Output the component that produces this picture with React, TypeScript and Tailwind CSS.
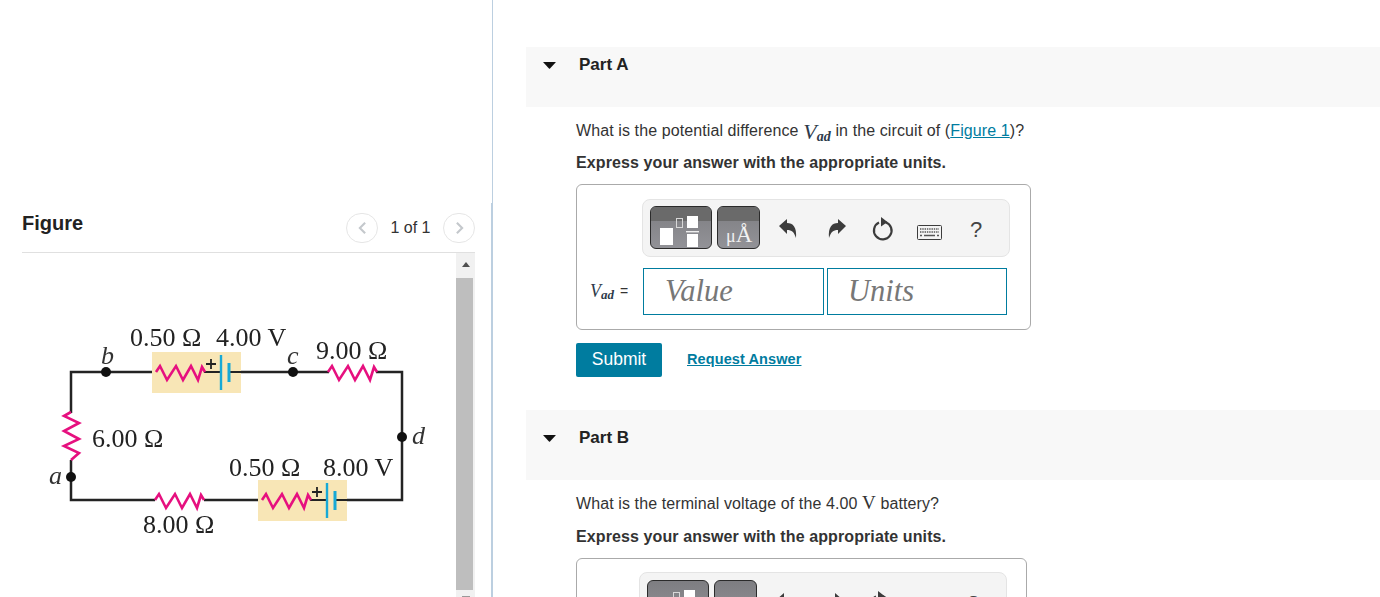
import type { ReactNode } from "react"

const wire = "#232323"
const pink = "#e6107f"
const blue = "#17a9d6"

// resistor zigzag starting at x, running along y
function zig(x: number, y: number) {
  const d = [4, 11, 20, 27, 35, 42, 46]
  return `M${x} ${y} ` + d.map((o, i) => `L${x + o} ${y + (i === 6 ? -5 : i % 2 === 0 ? -6 : 8)}`).join(" ") + ` L${x + 49} ${y}`
}

function Battery({ x, y }: { x: number; y: number }) {
  return (
    <g>
      <rect x={x} y={y - 20} width={89} height={41} fill="#f8e6b6" />
      <path d={`M${x + 52} ${y}H${x + 70}M${x + 78} ${y}H${x + 89}`} stroke={wire} strokeWidth={2} />
      <path d={zig(x + 4, y)} fill="none" stroke={pink} strokeWidth={2.6} />
      <path d={`M${x + 54} ${y - 8}H${x + 64}M${x + 59} ${y - 13}V${y - 3}`} stroke="#222" strokeWidth={1.8} />
      <path d={`M${x + 69} ${y - 17}V${y + 18}`} stroke={blue} strokeWidth={2.4} />
      <path d={`M${x + 77} ${y - 9}V${y + 10}`} stroke={blue} strokeWidth={3} />
    </g>
  )
}

function Circuit() {
  const labels: [string, number, number][] = [
    ["0.50 Ω", 130, 346],
    ["4.00 V", 216, 346],
    ["9.00 Ω", 316, 359],
    ["6.00 Ω", 92, 447],
    ["0.50 Ω", 229, 476],
    ["8.00 V", 323, 476],
    ["8.00 Ω", 143, 533],
  ]
  const names: [string, number, number][] = [
    ["b", 101, 364],
    ["c", 287, 364],
    ["d", 412, 444],
    ["a", 49, 484],
  ]
  return (
    <svg viewBox="22 253 434 345" className="w-[434px] h-[345px] shrink-0 blur-[0.3px]">
      <path d="M152 372H71V413M71 460V500H155M204 500H258M347 500H402V372H376M329 372H241" fill="none" stroke={wire} strokeWidth={2.5} />
      <Battery x={152} y={372} />
      <Battery x={258} y={500} />
      <path d={zig(328, 372)} fill="none" stroke={pink} strokeWidth={2.6} />
      <path d={zig(155, 500)} fill="none" stroke={pink} strokeWidth={2.6} />
      <path d="M71 412L64 416L79 423L64 431L79 439L64 446L79 453L71 460" fill="none" stroke={pink} strokeWidth={2.6} />
      <circle cx={106} cy={372} r={5} fill="#111" />
      <circle cx={293} cy={372} r={5} fill="#111" />
      <circle cx={402} cy={437} r={5} fill="#111" />
      <circle cx={71} cy={477} r={5} fill="#111" />
      {labels.map(([t, x, y]) => (
        <text key={t + x} x={x} y={y} fontFamily="Liberation Serif, serif" fontSize={26} fill="#222">
          {t}
        </text>
      ))}
      {names.map(([t, x, y]) => (
        <text key={t} x={x} y={y} fontFamily="Liberation Serif, serif" fontStyle="italic" fontSize={26} fill="#333">
          {t}
        </text>
      ))}
    </svg>
  )
}

function Pager({ dir }: { dir: "l" | "r" }) {
  return (
    <div className="w-[32px] h-[30px] rounded-full border border-[#e6e6e6] flex items-center justify-center">
      <svg viewBox="0 0 10 16" className="w-[9px] h-[14px]">
        <path d={dir === "l" ? "M8 2L2 8L8 14" : "M2 2L8 8L2 14"} fill="none" stroke="#c4c8cc" strokeWidth={2.4} />
      </svg>
    </div>
  )
}

function LeftPanel() {
  return (
    <div className="w-[491px] h-[597px] shrink-0 pl-[22px] pt-[208px] pr-[16px]">
      <div className="h-[45px] flex items-center border-b border-[#e0e0e0]">
        <span className="text-[20px] font-bold text-[#222] flex-1 -mt-[15px]">Figure</span>
        <div className="flex items-center -mt-[5px]">
          <Pager dir="l" />
          <span className="w-[65px] text-center text-[16px] text-[#333]">1 of 1</span>
          <Pager dir="r" />
        </div>
      </div>
      <div className="flex">
        <Circuit />
        <div className="w-[19px] h-[345px] bg-[#f1f1f1] flex flex-col">
          <div className="h-[25px] flex justify-center pt-[9px] shrink-0">
            <div className="w-0 h-0 border-x-[4px] border-x-transparent border-b-[5px] border-b-[#505050]" />
          </div>
          <div className="w-[17px] h-[312px] bg-[#bebebe] shrink-0" />
          <div className="flex justify-center pt-[6px]">
            <div className="w-[8px] h-[2px] bg-[#999]" />
          </div>
        </div>
      </div>
    </div>
  )
}

function PartHead({ name, cls, triTop, textTop }: { name: string; cls: string; triTop: string; textTop: string }) {
  return (
    <div className={`bg-[#f8f8f8] flex items-start pl-[17px] ${cls}`}>
      <svg viewBox="0 0 13 7" className={`w-[13px] h-[7px] shrink-0 ${triTop}`}>
        <path d="M0.5 0H12.5Q13 0 12.6 0.5L7 6.6Q6.5 7 6 6.6L0.4 0.5Q0 0 0.5 0Z" fill="#111" />
      </svg>
      <span className={`ml-[23px] text-[17px] font-bold leading-[18px] text-[#222] ${textTop}`}>{name}</span>
    </div>
  )
}

function Vad({ size, subSize }: { size: string; subSize: string }) {
  return (
    <span className="font-['Liberation_Serif',serif] italic text-[#2d3a4a] whitespace-nowrap">
      <span className={size}>V</span>
      <sub className={`${subSize} font-semibold align-baseline relative top-[2px]`}>ad</sub>
    </span>
  )
}

function MathBtnA({ band }: { band: boolean }) {
  return (
    <div className="relative w-[62px] h-[43px] rounded-[6px] border border-[#2b2b2b] overflow-hidden bg-gradient-to-b from-[#7e7e82] to-[#929297] shrink-0">
      {band && <div className="h-[14px] bg-[#6a6a6a]" />}
      <svg viewBox="0 0 62 43" className="absolute left-[-1px] top-[-1px] w-[62px] h-[43px]">
        <rect x={10} y={22} width={13} height={17} fill="#fff" />
        <rect x={26.5} y={12.5} width={6} height={9} fill="none" stroke="#d8d8d8" />
        <rect x={37} y={10} width={11} height={12} fill="#fff" />
        <rect x={36} y={25} width={13} height={1.4} fill="#eee" />
        <rect x={37} y={28} width={11} height={13} fill="#fff" />
      </svg>
    </div>
  )
}

function MathBtnB({ band }: { band: boolean }) {
  return (
    <div className="relative w-[43px] h-[43px] rounded-[6px] border border-[#2b2b2b] overflow-hidden bg-gradient-to-b from-[#7e7e82] to-[#929297] shrink-0 ml-[5px]">
      {band && <div className="h-[14px] bg-[#6a6a6a]" />}
      <div className="absolute left-[8px] bottom-[2px] font-['Liberation_Serif',serif] text-[#f2f2f2] leading-none whitespace-nowrap">
        <span className="text-[18px]">μ</span>
        <span className="text-[23px]">Å</span>
      </div>
    </div>
  )
}

function Toolbar({ cls, band }: { cls: string; band: boolean }) {
  const c = "#3c3c3c"
  return (
    <div className={`w-[368px] h-[58px] rounded-[8px] border border-[#e4e4e4] bg-[#f4f4f4] flex items-start pl-[7px] ${cls}`}>
      <MathBtnA band={band} />
      <MathBtnB band={band} />
      <svg viewBox="0 0 18 20" className="w-[18px] h-[20px] ml-[19px] mt-[13px] shrink-0">
        <path d="M0 7L8 0V4C14 4 18 8 17 19C15 13 13 11 8 11V15Z" fill={c} />
      </svg>
      <svg viewBox="0 0 18 20" className="w-[18px] h-[20px] ml-[31px] mt-[13px] shrink-0">
        <path d="M18 7L10 0V4C4 4 0 8 1 19C3 13 5 11 10 11V15Z" fill={c} />
      </svg>
      <svg viewBox="0 0 22 24" className="w-[22px] h-[24px] ml-[26px] mt-[11px] shrink-0">
        <path d="M13.5 5.2A8.8 8.8 0 1 1 7 5.6" fill="none" stroke={c} strokeWidth={2.2} />
        <path d="M9 0L15.5 5L9 9.5Z" fill={c} />
      </svg>
      <svg viewBox="0 0 25 15" className="w-[25px] h-[15px] ml-[23px] mt-[19px] shrink-0">
        <rect x={0.5} y={0.5} width={24} height={14} rx={1} fill="#f4f4f4" stroke={c} />
        <path d="M3 4H22M3 7H22" stroke="#555" strokeWidth={1.4} strokeDasharray="1.4 0.9" />
        <path d="M3 10.5H5M7 10.5H18M20 10.5H22" stroke="#555" strokeWidth={1.4} />
      </svg>
      <span className="ml-[28px] mt-[12px] text-[22px] leading-[24px] text-[#444]">?</span>
    </div>
  )
}

function Field({ text, w }: { text: string; w: string }) {
  return (
    <div className={`h-[47px] border border-[#007c9f] flex items-center font-['Liberation_Serif',serif] italic text-[30.5px] text-[#777] ${w}`}>
      {text}
    </div>
  )
}

function AnswerBox({ children, cls }: { children: ReactNode; cls: string }) {
  return <div className={`border border-[#aaaaaa] rounded-[6px] ${cls}`}>{children}</div>
}

function Question({ children }: { children: ReactNode }) {
  return <div className="ml-[50px] text-[16px] leading-[20px] text-[#333] tracking-[0.1px]">{children}</div>
}

function RightPanel() {
  return (
    <div className="flex-1 min-w-0 pl-[33px] pt-[47px]">
      <PartHead name="Part A" cls="h-[60px]" triTop="mt-[15px]" textTop="mt-[9px]" />
      <div className="mt-[12px] h-[24px] flex items-center ml-[50px] text-[16px] text-[#333] whitespace-pre tracking-[0.1px]">
        What is the potential difference <Vad size="text-[22px]" subSize="text-[14px]" /> in the circuit of (
        <span className="text-[#007c9f] underline">Figure 1</span>)?
      </div>
      <div className="mt-[10px]">
        <Question>
          <b>Express your answer with the appropriate units.</b>
        </Question>
      </div>
      <div className="ml-[50px] mt-[11px]">
        <AnswerBox cls="w-[455px] h-[146px] pt-[14px]">
          <Toolbar cls="ml-[65px] pt-[6px]" band />
          <div className="flex items-center mt-[11px]">
            <div className="w-[66px] pl-[13px] flex items-center gap-[6px] text-[14px] text-[#333]">
              <Vad size="text-[18px]" subSize="text-[13px]" />
              <span>=</span>
            </div>
            <Field text="Value" w="w-[181px] pl-[21px]" />
            <Field text="Units" w="w-[180px] ml-[3px] pl-[20px]" />
          </div>
        </AnswerBox>
        <div className="flex items-center mt-[13px]">
          <div className="w-[86px] h-[34px] pb-[2px] bg-[#007c9f] rounded-[2px] text-white text-[17.5px] flex items-center justify-center">
            Submit
          </div>
          <span className="ml-[25px] pb-[1px] text-[14.5px] font-bold text-[#007c9f] underline tracking-[0.1px]">Request Answer</span>
        </div>
      </div>
      <div className="mt-[33px]">
        <PartHead name="Part B" cls="h-[70px]" triTop="mt-[25px]" textTop="mt-[19px]" />
      </div>
      <div className="mt-[13px] h-[21px] flex items-center ml-[50px] text-[16px] text-[#333] whitespace-pre tracking-[0.1px]">
        What is the terminal voltage of the 4.00 <span className="font-['Liberation_Serif',serif] text-[19px]">V</span> battery?
      </div>
      <div className="mt-[13px]">
        <Question>
          <b>Express your answer with the appropriate units.</b>
        </Question>
      </div>
      <div className="ml-[50px] mt-[11px]">
        <AnswerBox cls="w-[451px] h-[146px] pt-[13px]">
          <Toolbar cls="ml-[62px] pt-[7px]" band={false} />
        </AnswerBox>
      </div>
    </div>
  )
}

export default function App() {
  return (
    <div className="w-[1380px] h-[597px] overflow-hidden flex bg-white font-['Liberation_Sans',Arial,sans-serif]">
      <LeftPanel />
      <div className="w-[2px] h-[597px] shrink-0 flex flex-col items-end">
        <div className="w-[1px] h-[203px] bg-[#bccfe0]" />
        <div className="w-[2px] flex-1 bg-[#bccfe0]" />
      </div>
      <RightPanel />
    </div>
  )
}
